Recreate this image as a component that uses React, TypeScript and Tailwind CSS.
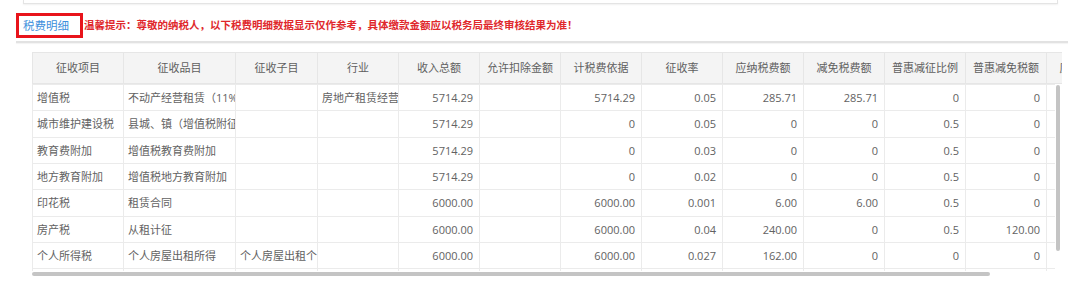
import React from "react";

const FONT = { fontFamily: '"Open Sans", "Noto Sans CJK SC", sans-serif' };

const widths = [91, 112, 82, 81, 81, 81, 81, 81, 81, 81, 81, 81, 81];

const headers = [
  "征收项目",
  "征收品目",
  "征收子目",
  "行业",
  "收入总额",
  "允许扣除金额",
  "计税费依据",
  "征收率",
  "应纳税费额",
  "减免税费额",
  "普惠减征比例",
  "普惠减免税额",
  "应缴税费额",
];

const rows: string[][] = [
  ["增值税", "不动产经营租赁（11%）", "", "房地产租赁经营", "5714.29", "", "5714.29", "0.05", "285.71", "285.71", "0", "0", "0"],
  ["城市维护建设税", "县城、镇（增值税附征）", "", "", "5714.29", "", "0", "0.05", "0", "0", "0.5", "0", "0"],
  ["教育费附加", "增值税教育费附加", "", "", "5714.29", "", "0", "0.03", "0", "0", "0.5", "0", "0"],
  ["地方教育附加", "增值税地方教育附加", "", "", "5714.29", "", "0", "0.02", "0", "0", "0.5", "0", "0"],
  ["印花税", "租赁合同", "", "", "6000.00", "", "6000.00", "0.001", "6.00", "6.00", "0.5", "0", "6.00"],
  ["房产税", "从租计征", "", "", "6000.00", "", "6000.00", "0.04", "240.00", "0", "0.5", "120.00", "120.00"],
  ["个人所得税", "个人房屋出租所得", "个人房屋出租个人", "", "6000.00", "", "6000.00", "0.027", "162.00", "0", "0", "0", "162.00"],
  ["", "", "", "", "", "", "", "", "", "", "", "", ""],
];

const tableWidth = widths.reduce((a, b) => a + b, 0);

function Cols() {
  return (
    <colgroup>
      {widths.map((w, i) => (
        <col key={i} style={{ width: w }} />
      ))}
    </colgroup>
  );
}

export default function App() {
  return (
    <div className="w-[1080px] h-[290px] bg-white overflow-hidden text-[#626262]" style={FONT}>
      {/* card above */}
      <div className="ml-[23px] w-[1035px] h-[4px] border-x border-b border-[#e4e4e4] shadow-[0_1px_2px_rgba(0,0,0,0.06)]" />

      {/* tab row */}
      <div className="ml-[16px] mt-[9px] flex items-center h-[25px]">
        <div className="h-[25px] w-[67px] border-[3px] border-[#e8141b] flex items-center pl-[4px]">
          <span className="text-[11.5px] text-[#3d8fdc] leading-none">税费明细</span>
        </div>
        <span className="ml-[1px] text-[10.5px] font-bold text-[#e0282c] leading-none">
          温馨提示：尊敬的纳税人，以下税费明细数据显示仅作参考，具体缴款金额应以税务局最终审核结果为准！
        </span>
      </div>
      <div className="ml-[16px] mt-[3px] w-[1052px] h-[2px] bg-[#e2e2e2] shadow-[0_1px_1px_rgba(0,0,0,0.05)]" />

      {/* table */}
      <div className="ml-[32px] mt-[9px] w-[1030px]">
        <div className="w-[1030px] overflow-hidden">
          <table className="table-fixed border-collapse text-[11px]" style={{ width: tableWidth }}>
            <Cols />
            <thead>
              <tr className="h-[31px] bg-[#f4f4f4]">
                {headers.map((h, i) => (
                  <th
                    key={i}
                    className="font-normal text-center whitespace-nowrap overflow-hidden border border-[#e6e6e6] text-[#606060] px-[2px]"
                  >
                    {h}
                  </th>
                ))}
              </tr>
            </thead>
          </table>
        </div>
        <div className="flex">
          <div className="w-[1023px] h-[187px] overflow-hidden">
            <table className="table-fixed border-collapse text-[11px]" style={{ width: tableWidth }}>
              <Cols />
              <tbody>
                {rows.map((r, ri) => (
                  <tr key={ri} className="h-[26.33px]">
                    {r.map((c, ci) => (
                      <td
                        key={ci}
                        className={
                          "border border-[#ebebeb] whitespace-nowrap overflow-hidden text-clip leading-none " +
                          (ci >= 4 ? "text-right pr-[6px]" : "text-left pl-[4px]")
                        }
                      >
                        {c}
                      </td>
                    ))}
                  </tr>
                ))}
              </tbody>
            </table>
          </div>
          <div className="w-[7px] h-[187px] pt-[1px] pl-[1px]">
            <div className="w-[4px] h-[166px] rounded-[2px] bg-[#c4c4c4]" />
          </div>
        </div>
        <div className="h-[6px] pt-[1px]">
          <div className="w-[958px] h-[4px] rounded-[2px] bg-[#c4c4c4]" />
        </div>
      </div>
    </div>
  );
}
